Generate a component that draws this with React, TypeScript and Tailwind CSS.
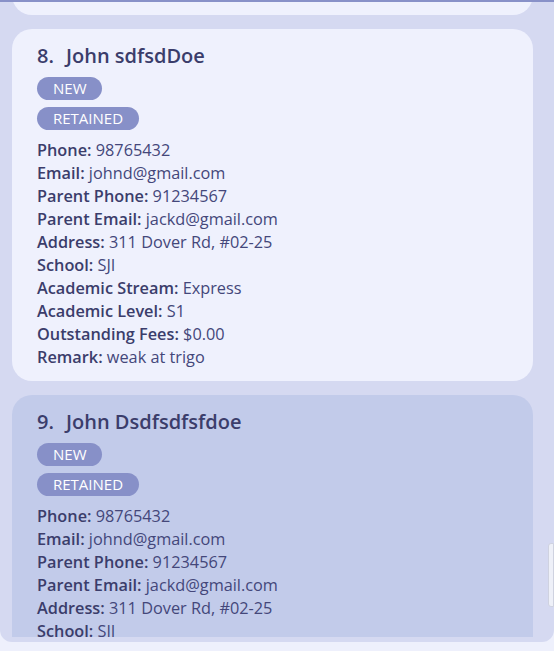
import React from "react";

type Person = {
  id: number;
  name: string;
  tags: string[];
  fields: [string, string][];
  selected?: boolean;
};

const fields = (school: string): [string, string][] => [
  ["Phone", "98765432"],
  ["Email", "johnd@gmail.com"],
  ["Parent Phone", "91234567"],
  ["Parent Email", "jackd@gmail.com"],
  ["Address", "311 Dover Rd, #02-25"],
  ["School", school],
  ["Academic Stream", "Express"],
  ["Academic Level", "S1"],
  ["Outstanding Fees", "$0.00"],
  ["Remark", "weak at trigo"],
];

const people: Person[] = [
  { id: 7, name: "John Doe", tags: ["NEW", "RETAINED"], fields: fields("SJI") },
  { id: 8, name: "John sdfsdDoe", tags: ["NEW", "RETAINED"], fields: fields("SJI") },
  { id: 9, name: "John Dsdfsdfsfdoe", tags: ["NEW", "RETAINED"], fields: fields("SJI"), selected: true },
];

function PersonCard({ p }: { p: Person }) {
  return (
    <div
      className={`rounded-[20px] pl-[25px] pr-4 pt-[14px] pb-[12px] ${
        p.selected ? "bg-[#c2cbea]" : "bg-[#eff1fd]"
      }`}
    >
      <div className="text-[20px] leading-[26px] font-semibold text-[#3b3d6b] flex">
        <span className="w-[29px]">{p.id}.</span>
        <span>{p.name}</span>
      </div>
      <div className="flex flex-col items-start gap-[7px] mt-[8px] mb-[9px]">
        {p.tags.map((t) => (
          <span
            key={t}
            className="bg-[#8790c8] text-white text-[15px] font-medium leading-[23px] h-[23px] px-4 rounded-full"
          >
            {t}
          </span>
        ))}
      </div>
      <div className="text-[16.3px] leading-[23px] text-[#44477a]">
        {p.fields.map(([k, v]) => (
          <div key={k}>
            <span className="font-semibold text-[#3b3d6b]">{k}:</span> {v}
          </div>
        ))}
      </div>
    </div>
  );
}

export default function App() {
  return (
    <div
      className="h-[651px] w-[554px] bg-[#eef0fc] flex flex-col overflow-hidden relative"
      style={{ fontFamily: '"Open Sans", "Noto Sans", sans-serif' }}
    >
      <div className="h-[2px] bg-[#8891c8] shrink-0" />
      {/* list panel */}
      <div className="h-[640px] bg-[#d5d9f1] rounded-b-[12px] pb-[5px] flex flex-col shrink-0">
        <div className="flex-1 overflow-hidden pl-3 pr-[21px]">
          <div className="flex flex-col gap-[14px] -mt-[339px]">
            {people.map((p) => (
              <PersonCard key={p.id} p={p} />
            ))}
          </div>
        </div>
      </div>
      {/* scrollbar thumb */}
      <div className="absolute right-0 top-[543px] w-[6px] h-[64px] bg-[#eef0f8] border border-[#cfd2e0] rounded-l-[3px]" />
    </div>
  );
}
